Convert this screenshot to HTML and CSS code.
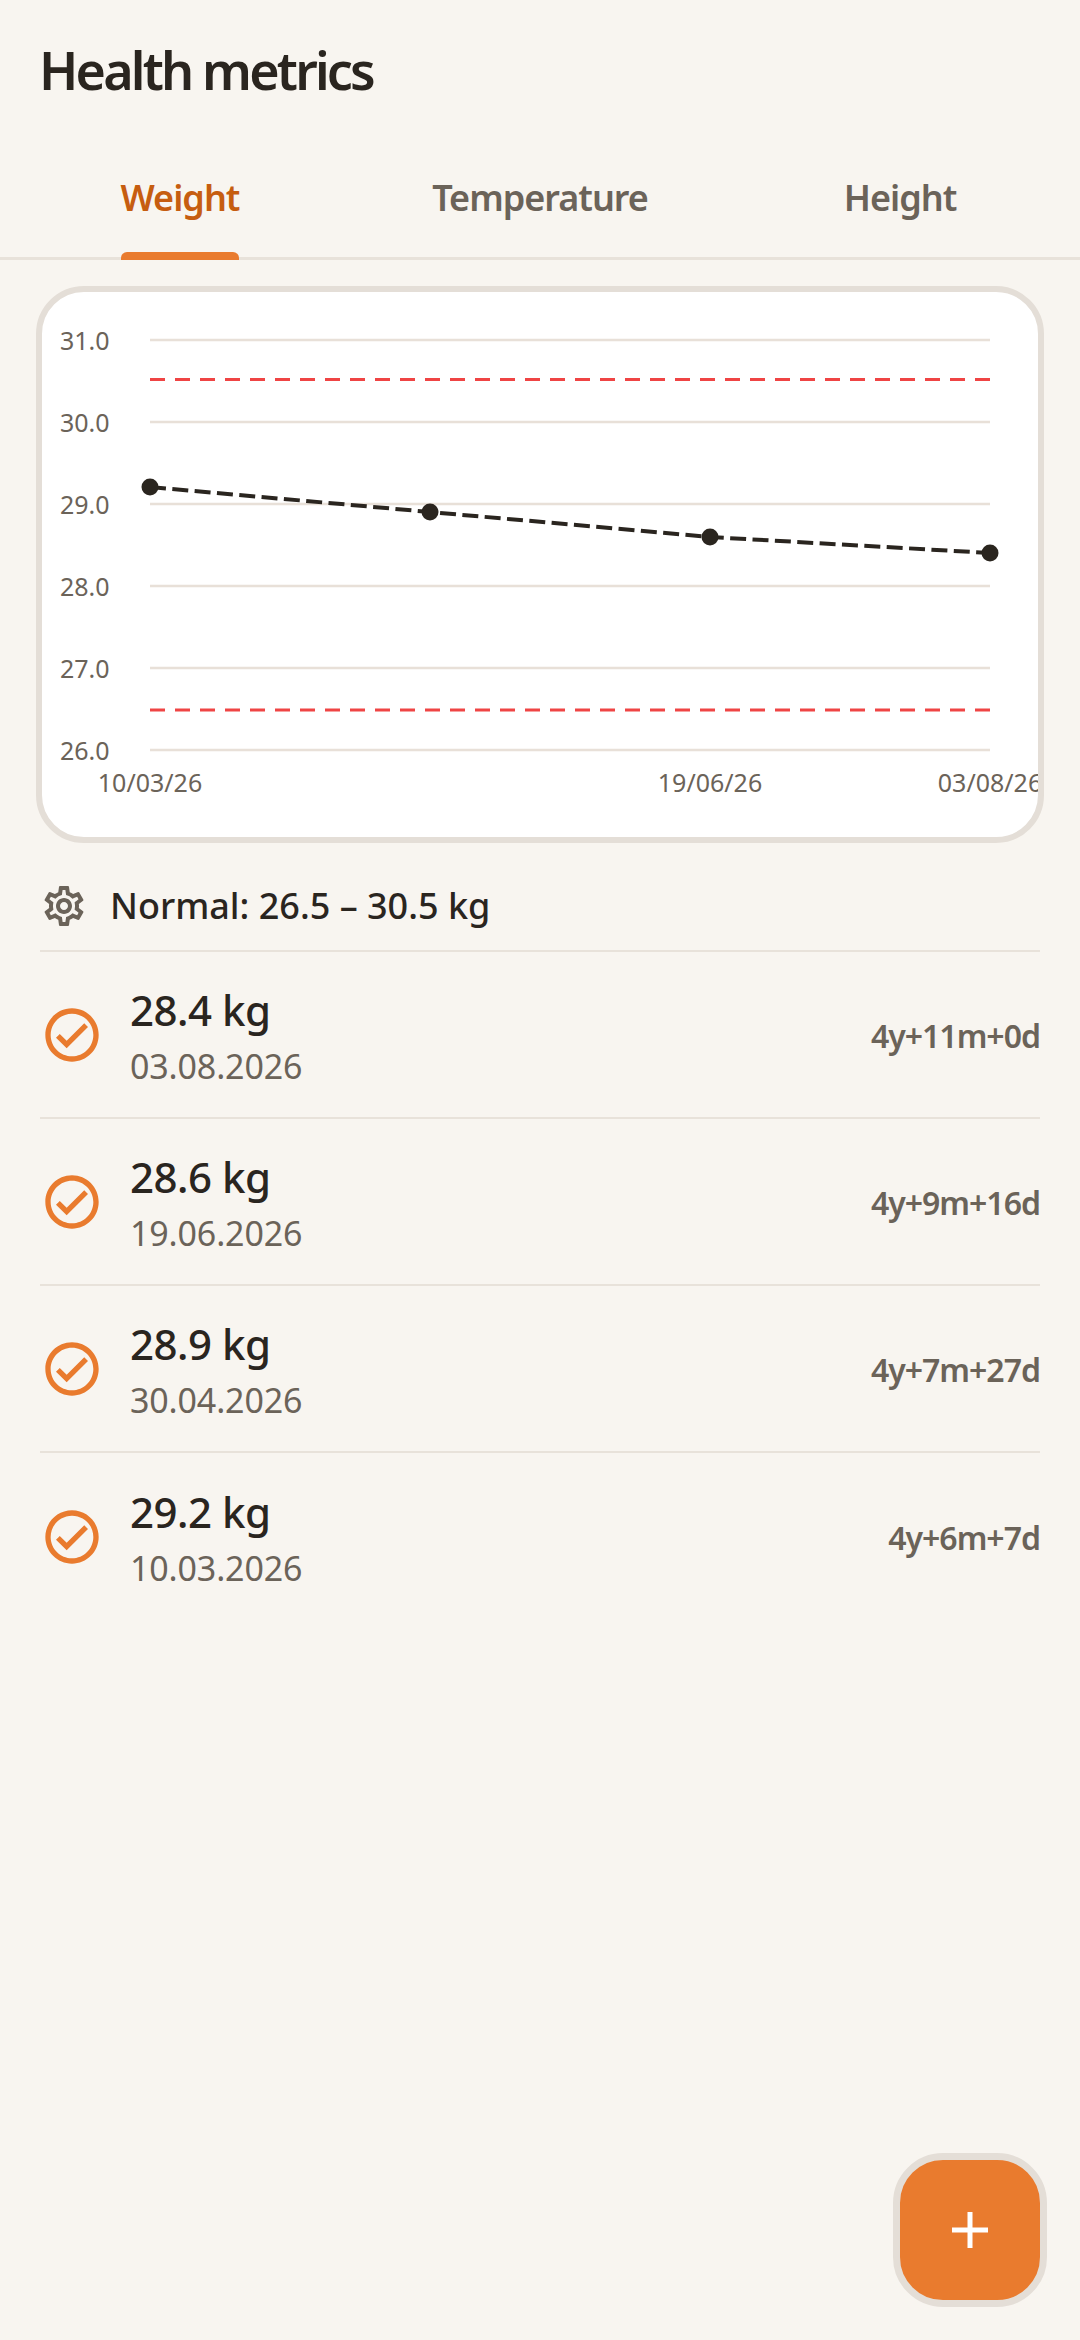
FILE: index.html
```html
<!DOCTYPE html>
<html lang="en">
<head>
<meta charset="utf-8">
<title>Health metrics</title>
<link rel="stylesheet" href="styles.css">
</head>
<body>
<main class="screen">
  <header class="header"><h1 class="title">Health metrics</h1></header>
  <nav class="tabs">
    <div class="tab active"><span class="tab-label">Weight</span></div>
    <div class="tab"><span class="tab-label">Temperature</span></div>
    <div class="tab"><span class="tab-label">Height</span></div>
  </nav>
  <section class="card">
    <svg class="chart" viewBox="42 292 1000 545" width="1000" height="545">
      <g class="grid">
        <line x1="150" x2="990" y1="340" y2="340"/>
        <line x1="150" x2="990" y1="422" y2="422"/>
        <line x1="150" x2="990" y1="504" y2="504"/>
        <line x1="150" x2="990" y1="586" y2="586"/>
        <line x1="150" x2="990" y1="668" y2="668"/>
        <line x1="150" x2="990" y1="750" y2="750"/>
      </g>
      <g class="limit">
        <line x1="150" x2="990" y1="379.5" y2="379.5"/>
        <line x1="150" x2="990" y1="710" y2="710"/>
      </g>
      <g class="axis">
        <text x="60" y="349.5">31.0</text>
        <text x="60" y="431.5">30.0</text>
        <text x="60" y="513.5">29.0</text>
        <text x="60" y="595.5">28.0</text>
        <text x="60" y="677.5">27.0</text>
        <text x="60" y="759.5">26.0</text>
        <text class="mid" x="150" y="792">10/03/26</text>
        <text class="mid" x="710" y="792">19/06/26</text>
        <text class="mid" x="990" y="792">03/08/26</text>
      </g>
      <polyline class="trend" points="150,487 430,512 710,537 990,553"/>
      <g class="dots">
        <circle cx="150" cy="487" r="8.5"/>
        <circle cx="430" cy="512" r="8.5"/>
        <circle cx="710" cy="537" r="8.5"/>
        <circle cx="990" cy="553" r="8.5"/>
      </g>
    </svg>
  </section>
  <section class="list">
    <div class="normal">
      <svg class="gear" viewBox="0 0 24 24" width="48" height="48"><path d="M19.43 12.98c.04-.32.07-.64.07-.98 0-.34-.03-.66-.07-.98l2.11-1.65c.19-.15.24-.42.12-.64l-2-3.46c-.09-.16-.26-.25-.44-.25-.06 0-.12.01-.17.03l-2.49 1c-.52-.4-1.08-.73-1.69-.98l-.38-2.65C14.46 2.18 14.25 2 14 2h-4c-.25 0-.46.18-.49.42l-.38 2.65c-.61.25-1.17.59-1.69.98l-2.49-1c-.06-.02-.12-.03-.18-.03-.17 0-.34.09-.43.25l-2 3.46c-.13.22-.07.49.12.64l2.11 1.65c-.04.32-.07.65-.07.98 0 .33.03.66.07.98l-2.11 1.65c-.19.15-.24.42-.12.64l2 3.46c.09.16.26.25.44.25.06 0 .12-.01.17-.03l2.49-1c.52.4 1.08.73 1.69.98l.38 2.65c.03.24.24.42.49.42h4c.25 0 .46-.18.49-.42l.38-2.65c.61-.25 1.17-.59 1.69-.98l2.49 1c.06.02.12.03.18.03.17 0 .34-.09.43-.25l2-3.46c.12-.22.07-.49-.12-.64l-2.11-1.65zm-1.98-1.71c.04.31.05.52.05.73 0 .21-.02.43-.05.73l-.14 1.13.89.7 1.08.84-.7 1.21-1.27-.51-1.04-.42-.9.68c-.43.32-.84.56-1.25.73l-1.06.43-.16 1.13-.2 1.35h-1.4l-.19-1.35-.16-1.13-1.06-.43c-.43-.18-.83-.41-1.23-.71l-.91-.7-1.06.43-1.27.51-.7-1.21 1.08-.84.89-.7-.14-1.13c-.03-.31-.05-.54-.05-.74s.02-.43.05-.73l.14-1.13-.89-.7-1.08-.84.7-1.21 1.27.51 1.04.42.9-.68c.43-.32.84-.56 1.25-.73l1.06-.43.16-1.13.2-1.35h1.39l.19 1.35.16 1.13 1.06.43c.43.18.83.41 1.23.71l.91.7 1.06-.43 1.27-.51.7 1.21-1.07.85-.89.7.14 1.13zM12 8c-2.21 0-4 1.79-4 4s1.79 4 4 4 4-1.79 4-4-1.79-4-4-4zm0 6c-1.1 0-2-.9-2-2s.9-2 2-2 2 .9 2 2-.9 2-2 2z"/></svg>
      <span class="normal-text">Normal: 26.5 – 30.5 kg</span>
    </div>
    <div class="row">
      <svg class="check" viewBox="0 0 24 24" width="64" height="64"><path d="M12 2C6.48 2 2 6.48 2 12s4.48 10 10 10 10-4.48 10-10S17.52 2 12 2zm0 18c-4.41 0-8-3.59-8-8s3.59-8 8-8 8 3.59 8 8-3.59 8-8 8zm4.59-12.42L10 14.17l-2.59-2.58L6 13l4 4 8-8z"/></svg>
      <div class="info"><div class="value">28.4 kg</div><div class="date">03.08.2026</div></div>
      <div class="age">4y+11m+0d</div>
    </div>
    <div class="row">
      <svg class="check" viewBox="0 0 24 24" width="64" height="64"><path d="M12 2C6.48 2 2 6.48 2 12s4.48 10 10 10 10-4.48 10-10S17.52 2 12 2zm0 18c-4.41 0-8-3.59-8-8s3.59-8 8-8 8 3.59 8 8-3.59 8-8 8zm4.59-12.42L10 14.17l-2.59-2.58L6 13l4 4 8-8z"/></svg>
      <div class="info"><div class="value">28.6 kg</div><div class="date">19.06.2026</div></div>
      <div class="age">4y+9m+16d</div>
    </div>
    <div class="row">
      <svg class="check" viewBox="0 0 24 24" width="64" height="64"><path d="M12 2C6.48 2 2 6.48 2 12s4.48 10 10 10 10-4.48 10-10S17.52 2 12 2zm0 18c-4.41 0-8-3.59-8-8s3.59-8 8-8 8 3.59 8 8-3.59 8-8 8zm4.59-12.42L10 14.17l-2.59-2.58L6 13l4 4 8-8z"/></svg>
      <div class="info"><div class="value">28.9 kg</div><div class="date">30.04.2026</div></div>
      <div class="age">4y+7m+27d</div>
    </div>
    <div class="row last">
      <svg class="check" viewBox="0 0 24 24" width="64" height="64"><path d="M12 2C6.48 2 2 6.48 2 12s4.48 10 10 10 10-4.48 10-10S17.52 2 12 2zm0 18c-4.41 0-8-3.59-8-8s3.59-8 8-8 8 3.59 8 8-3.59 8-8 8zm4.59-12.42L10 14.17l-2.59-2.58L6 13l4 4 8-8z"/></svg>
      <div class="info"><div class="value">29.2 kg</div><div class="date">10.03.2026</div></div>
      <div class="age">4y+6m+7d</div>
    </div>
  </section>
  <button class="fab" type="button" aria-label="Add">
    <svg viewBox="0 0 36 36" width="36" height="36"><path d="M15.5 0h5v15.5H36v5H20.5V36h-5V20.5H0v-5h15.5z"/></svg>
  </button>
</main>
</body>
</html>
```
FILE: styles.css
```css
* { box-sizing: border-box; }
html, body { margin: 0; padding: 0; }
body {
  background: #f8f5f0;
  font-family: "Noto Sans", sans-serif;
  color: #2a251f;
}
.screen {
  position: relative;
  width: 1080px;
  height: 2340px;
  overflow: hidden;
}
.header {
  height: 144px;
  padding: 40px 40px 0 39px;
}
.title {
  margin: 0;
  font-size: 52px;
  line-height: 60px;
  font-weight: 600;
  letter-spacing: -2.8px;
}
.tabs {
  display: grid;
  grid-template-columns: repeat(3, 1fr);
  height: 116px;
  border-bottom: 3px solid #e8e2da;
}
.tab {
  display: flex;
  justify-content: center;
  color: #6b6359;
  font-size: 36px;
  font-weight: 600;
  line-height: 50px;
  letter-spacing: -1px;
}
.tab-label {
  position: relative;
  height: 116px;
  padding-top: 29px;
}
.tab.active { color: #c65d10; }
.tab.active .tab-label::after {
  content: "";
  position: absolute;
  left: 0;
  right: 0;
  bottom: 0;
  height: 8px;
  background: #e97b2e;
  border-radius: 6px 6px 0 0;
}
.card {
  margin: 26px 36px 0;
  height: 557px;
  background: #fff;
  border: 6px solid #e4ded7;
  border-radius: 48px;
  overflow: hidden;
}
.chart { display: block; }
.grid line { stroke: #e8e0d8; stroke-width: 2.5; }
.limit line { stroke: #ef4444; stroke-width: 3; stroke-dasharray: 15 10; }
.axis text { font-size: 25px; fill: #6b6359; }
.axis .mid { text-anchor: middle; }
.trend { fill: none; stroke: #2a251f; stroke-width: 4; stroke-dasharray: 16 6.4; }
.dots circle { fill: #2a251f; }
.list { padding: 0 40px; }
.normal {
  display: flex;
  align-items: center;
  gap: 22px;
  height: 109px;
  border-bottom: 2px solid #e8e2da;
  padding-top: 18px;
}
.gear path { fill: #6b6359; }
.normal-text {
  font-size: 36px;
  font-weight: 500;
}
.row {
  display: flex;
  align-items: center;
  height: 167px;
  border-bottom: 2px solid #e8e2da;
}
.row.last { border-bottom: 0; }
.check { flex: none; }
.check path { fill: #e97b2e; }
.info {
  margin-left: 26px;
  flex: 1;
}
.value {
  font-size: 42px;
  line-height: 56px;
  font-weight: 500;
  letter-spacing: -0.5px;
}
.date {
  margin-top: 6px;
  font-size: 34px;
  line-height: 44px;
  letter-spacing: -0.15px;
  color: #6b6359;
}
.age {
  padding-top: 2px;
  font-size: 32px;
  font-weight: 600;
  letter-spacing: -1px;
  color: #6b6359;
}
.fab {
  position: absolute;
  left: 893px;
  top: 2153px;
  display: flex;
  align-items: center;
  justify-content: center;
  width: 154px;
  height: 154px;
  padding: 0;
  background: #e97b2e;
  border: 7px solid #e4ded7;
  border-radius: 50px;
}
.fab path { fill: #fff; }
```
